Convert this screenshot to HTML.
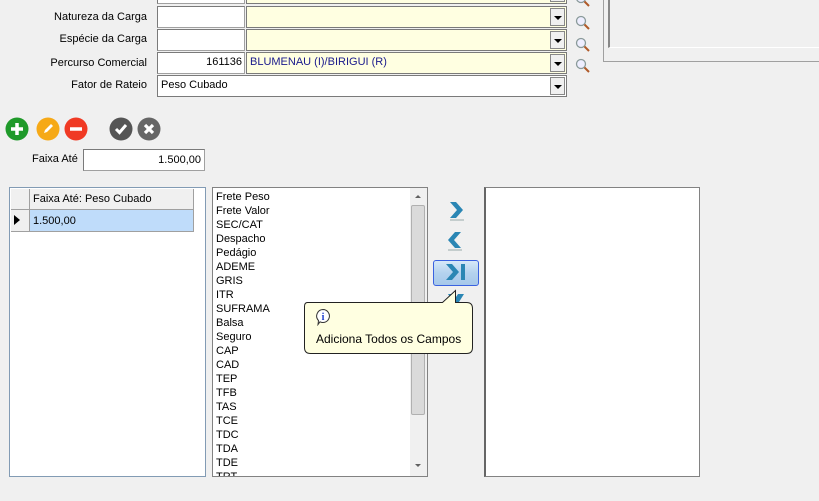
<!DOCTYPE html>
<html><head><style>
*{box-sizing:border-box;margin:0;padding:0}
body{width:819px;height:501px;background:#f0f0f0;font-family:"Liberation Sans",sans-serif;font-size:11px;color:#000;position:relative;overflow:hidden}
.a{position:absolute}
.lbl{position:absolute;text-align:right;width:140px;left:7px}
.inp{position:absolute;background:#fff;border:1px solid #a0a0a0;border-top-color:#7a7a7a;border-left-color:#7a7a7a;height:22px}
.cmb{position:absolute;background:#ffffe1;border:1px solid #7a7a7a;height:22px;padding:3px 3px;color:#1a1a8c}
.dd{position:absolute;right:1px;top:1px;width:15px;height:18px;background:#f0f0f0;border:1px solid #888}
.dd:after{content:"";position:absolute;left:3px;top:7px;border-left:4px solid transparent;border-right:4px solid transparent;border-top:4px solid #000}
.mag{position:absolute;width:16px;height:16px}
.c{position:absolute;width:24px;height:24px}
.it{height:14px;line-height:14px}
</style></head><body>
<div class="inp" style="left:157px;top:-18px;width:88px"></div>
<div class="cmb" style="left:246px;top:-18px;width:321px"><div class="dd"></div></div>
<svg class="mag" style="left:575px;top:-8px" viewBox="0 0 16 16"><circle cx="6" cy="6" r="4.5" fill="#eef" stroke="#8a9a9a" stroke-width="1.3"/><path d="M9.5 9.5L14 14" stroke="#b05a2a" stroke-width="2"/></svg>

<div class="lbl" style="top:11px">Natureza da Carga</div>
<div class="inp" style="left:157px;top:6px;width:88px"></div>
<div class="cmb" style="left:246px;top:6px;width:321px"><div class="dd"></div></div>
<svg class="mag" style="left:575px;top:15px" viewBox="0 0 16 16"><circle cx="6" cy="6" r="4.5" fill="#eef" stroke="#8a9a9a" stroke-width="1.3"/><path d="M9.5 9.5L14 14" stroke="#b05a2a" stroke-width="2"/></svg>

<div class="lbl" style="top:33px">Espécie da Carga</div>
<div class="inp" style="left:157px;top:29px;width:88px"></div>
<div class="cmb" style="left:246px;top:29px;width:321px"><div class="dd"></div></div>
<svg class="mag" style="left:575px;top:37px" viewBox="0 0 16 16"><circle cx="6" cy="6" r="4.5" fill="#eef" stroke="#8a9a9a" stroke-width="1.3"/><path d="M9.5 9.5L14 14" stroke="#b05a2a" stroke-width="2"/></svg>

<div class="lbl" style="top:57px">Percurso Comercial</div>
<div class="inp" style="left:157px;top:52px;width:88px;text-align:right;padding:3px 2px">161136</div>
<div class="cmb" style="left:246px;top:52px;width:321px">BLUMENAU (I)/BIRIGUI (R)<div class="dd"></div></div>
<svg class="mag" style="left:575px;top:58px" viewBox="0 0 16 16"><circle cx="6" cy="6" r="4.5" fill="#eef" stroke="#8a9a9a" stroke-width="1.3"/><path d="M9.5 9.5L14 14" stroke="#b05a2a" stroke-width="2"/></svg>

<div class="lbl" style="top:79px">Fator de Rateio</div>
<div class="cmb" style="left:157px;top:75px;width:410px;background:#fff;color:#000">Peso Cubado<div class="dd"></div></div>

<div class="a" style="left:603px;top:-5px;width:220px;height:67px;border-left:1px solid #a0a0a0;border-bottom:1px solid #a0a0a0"></div>
<div class="a" style="left:608px;top:-5px;width:215px;height:53px;border-left:2px solid #888;border-bottom:1px solid #fff"></div>

<svg class="c" style="left:5px;top:117px" viewBox="0 0 24 24"><circle cx="12" cy="12" r="11.5" fill="#1f9a2a"/><path d="M12 6v12M6 12h12" stroke="#fff" stroke-width="3.5"/></svg>
<svg class="c" style="left:36px;top:117px" viewBox="0 0 24 24"><circle cx="12" cy="12" r="11.5" fill="#f6a917"/><path d="M8 16l1-3 6-6 2 2-6 6z" fill="#fff"/></svg>
<svg class="c" style="left:64px;top:117px" viewBox="0 0 24 24"><circle cx="12" cy="12" r="11.5" fill="#f03a24"/><path d="M6 12h12" stroke="#fff" stroke-width="3.5"/></svg>
<svg class="c" style="left:109px;top:117px" viewBox="0 0 24 24"><circle cx="12" cy="12" r="11.5" fill="#555"/><path d="M7 12l3.5 3.5L17 8" stroke="#fff" stroke-width="3" fill="none"/></svg>
<svg class="c" style="left:137px;top:117px" viewBox="0 0 24 24"><circle cx="12" cy="12" r="11.5" fill="#666"/><path d="M8 8l8 8M16 8l-8 8" stroke="#fff" stroke-width="3.2"/></svg>

<div class="a" style="left:32px;top:153px">Faixa Até</div>
<div class="inp" style="left:83px;top:149px;width:122px;height:22px;text-align:right;padding:4px 3px">1.500,00</div>

<div class="a" style="left:9px;top:187px;width:197px;height:290px;background:#fff;border:1px solid #829bb4">
 <div class="a" style="left:1px;top:1px;width:19px;height:21px;background:#f0f0f0;border-right:1px solid #a0a0a0;border-bottom:1px solid #a0a0a0"></div>
 <div class="a" style="left:20px;top:1px;width:164px;height:21px;background:#f0f0f0;border-right:1px solid #a0a0a0;border-bottom:1px solid #a0a0a0;padding:4px 3px">Faixa Até: Peso Cubado</div>
 <div class="a" style="left:1px;top:22px;width:19px;height:22px;background:#f0f0f0;border-right:1px solid #a0a0a0;border-bottom:1px solid #a0a0a0"><div class="a" style="left:3px;top:5px;border-top:5px solid transparent;border-bottom:5px solid transparent;border-left:6px solid #000"></div></div>
 <div class="a" style="left:20px;top:22px;width:164px;height:22px;background:#bfdcfa;border-right:1px solid #a0a0a0;border-bottom:1px solid #a0a0a0;padding:5px 3px">1.500,00</div>
</div>

<div class="a" style="left:212px;top:187px;width:216px;height:290px;background:#fff;border:1px solid #828282;overflow:hidden">
 <div class="a" style="left:3px;top:2px">
 <div class="it">Frete Peso</div><div class="it">Frete Valor</div><div class="it">SEC/CAT</div><div class="it">Despacho</div><div class="it">Pedágio</div><div class="it">ADEME</div><div class="it">GRIS</div><div class="it">ITR</div><div class="it">SUFRAMA</div><div class="it">Balsa</div><div class="it">Seguro</div><div class="it">CAP</div><div class="it">CAD</div><div class="it">TEP</div><div class="it">TFB</div><div class="it">TAS</div><div class="it">TCE</div><div class="it">TDC</div><div class="it">TDA</div><div class="it">TDE</div><div class="it">TRT</div>
 </div>
 <div class="a" style="left:197px;top:0;width:17px;height:288px;background:#f0f0f0">
  <div class="a" style="left:5px;top:7px;border-left:3px solid transparent;border-right:3px solid transparent;border-bottom:3px solid #606060"></div>
  <div class="a" style="left:1px;top:17px;width:14px;height:210px;background:#dadada;border:1px solid #b0b0b0;border-radius:2px"></div>
  <div class="a" style="left:5px;top:276px;border-left:3px solid transparent;border-right:3px solid transparent;border-top:3px solid #606060"></div>
 </div>
</div>

<svg class="a" style="left:445px;top:200px" width="24" height="22" viewBox="0 0 24 22"><path d="M5 2h6l7 8-7 8H5l7-8z" fill="#2a86b4"/><path d="M5 20h14" stroke="#9aa" stroke-width="1"/></svg>
<svg class="a" style="left:443px;top:230px" width="24" height="22" viewBox="0 0 24 22"><path d="M18 2h-6l-7 8 7 8h6l-7-8z" fill="#2a86b4"/><path d="M5 20h14" stroke="#9aa" stroke-width="1"/></svg>
<div class="a" style="left:433px;top:260px;width:46px;height:26px;border:1px solid #3a62e0;border-radius:3px;background:linear-gradient(#d6e8f8,#b4d2ee 50%,#a6c8ea)"></div>
<svg class="a" style="left:443px;top:262px" width="28" height="22" viewBox="0 0 28 22"><path d="M3 2h6l7 8-7 8H3l7-8z" fill="#2a86b4"/><rect x="18" y="2" width="4" height="16" fill="#2a86b4"/></svg>
<svg class="a" style="left:444px;top:290px" width="24" height="12" viewBox="0 0 24 12"><path d="M4 4h6l2 3 2-3h6l-5 8H9z" fill="#2a86b4"/></svg>

<svg class="a" style="left:303px;top:287px" width="172" height="70" viewBox="0 0 172 70"><path d="M4.5 15.5H139.5L152.5 3.5V15.5H163.5Q169.5 15.5 169.5 21.5V60.5Q169.5 66.5 163.5 66.5H7.5Q1.5 66.5 1.5 60.5V19.5Q1.5 15.5 4.5 15.5Z" fill="#ffffe1" stroke="#222"/></svg>
<svg class="a" style="left:315px;top:308px" width="16" height="18" viewBox="0 0 16 18"><path d="M8 1.5a6.5 6.5 0 1 1-3 12.3L3 16.5l.5-4A6.5 6.5 0 0 1 8 1.5z" fill="#fff" stroke="#333"/><text x="8" y="12" font-size="10" font-weight="bold" text-anchor="middle" fill="#1a3acc" font-family="Liberation Serif">i</text></svg>
<div class="a" style="left:316px;top:332px;font-size:12px">Adiciona Todos os Campos</div>

<div class="a" style="left:484px;top:187px;width:216px;height:290px;background:#fff;border:1px solid #828282;border-left:2px solid #666"></div>
</body></html>
